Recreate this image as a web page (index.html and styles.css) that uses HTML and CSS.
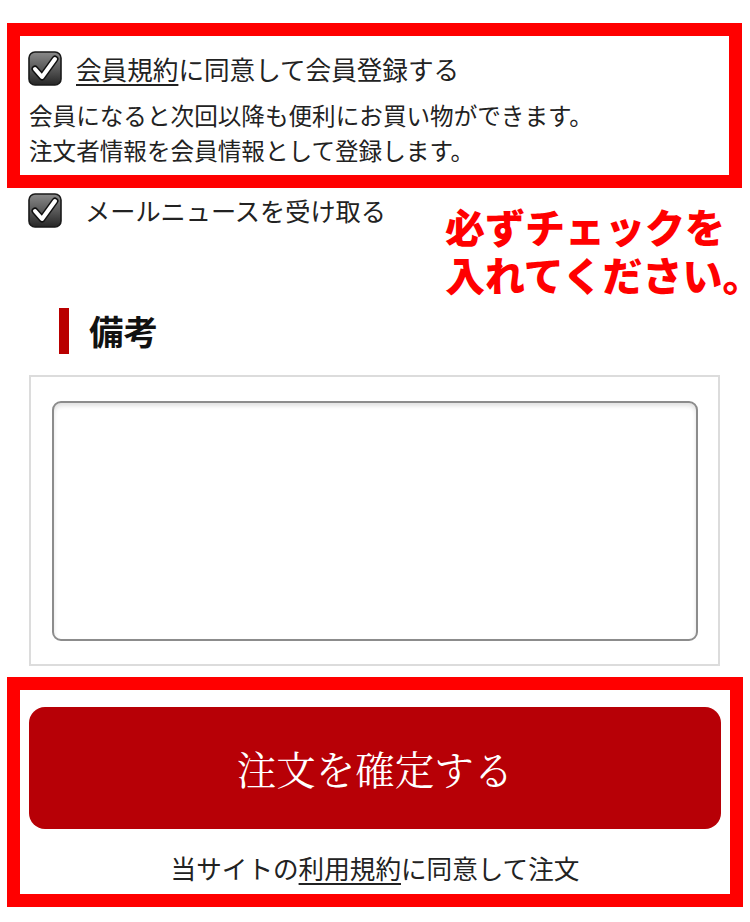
FILE: index.html
```html
<!DOCTYPE html>
<html lang="ja">
<head>
<meta charset="utf-8">
<title>注文確認</title>
<link rel="stylesheet" href="styles.css">
</head>
<body>
<div class="page">
  <section class="member-box">
    <label class="check-row">
      <span class="checkbox">
        <svg viewBox="0 0 34 35" width="34" height="35">
          <defs>
            <linearGradient id="cbg" x1="0" y1="0" x2="0" y2="1">
              <stop offset="0" stop-color="#8a8a8a"/>
              <stop offset="0.5" stop-color="#5a5a5a"/>
              <stop offset="1" stop-color="#262626"/>
            </linearGradient>
          </defs>
          <rect x="1" y="1" width="32" height="33" rx="6" ry="6" fill="url(#cbg)" stroke="#1a1a1a" stroke-width="1.6"/>
          <path d="M7 18 L14 26 L27 8" fill="none" stroke="#111" stroke-width="7" stroke-linecap="round" stroke-linejoin="round"/>
          <path d="M7 18 L14 26 L27 8" fill="none" stroke="#fff" stroke-width="4" stroke-linecap="round" stroke-linejoin="round"/>
        </svg>
      </span>
      <span class="check-label"><u>会員規約</u>に同意して会員登録する</span>
    </label>
    <p class="desc">会員になると次回以降も便利にお買い物ができます。<br>注文者情報を会員情報として登録します。</p>
  </section>

  <div class="news-area">
    <label class="check-row news-row">
      <span class="checkbox">
        <svg viewBox="0 0 34 35" width="34" height="35">
          <defs>
            <linearGradient id="cbg2" x1="0" y1="0" x2="0" y2="1">
              <stop offset="0" stop-color="#8a8a8a"/>
              <stop offset="0.5" stop-color="#5a5a5a"/>
              <stop offset="1" stop-color="#262626"/>
            </linearGradient>
          </defs>
          <rect x="1" y="1" width="32" height="33" rx="6" ry="6" fill="url(#cbg2)" stroke="#1a1a1a" stroke-width="1.6"/>
          <path d="M7 18 L14 26 L27 8" fill="none" stroke="#111" stroke-width="7" stroke-linecap="round" stroke-linejoin="round"/>
          <path d="M7 18 L14 26 L27 8" fill="none" stroke="#fff" stroke-width="4" stroke-linecap="round" stroke-linejoin="round"/>
        </svg>
      </span>
      <span class="check-label news-label">メールニュースを受け取る</span>
    </label>
    <p class="notice"><span class="notice-line">必ずチェックを</span><span class="notice-line">入れてください。</span></p>
  </div>

  <h2 class="section-title">備考</h2>

  <div class="remarks">
    <textarea class="remarks-input"></textarea>
  </div>

  <section class="order-box">
    <button class="order-btn" type="button">注文を確定する</button>
    <p class="terms">当サイトの<u>利用規約</u>に同意して注文</p>
  </section>
</div>
</body>
</html>
```

FILE: styles.css
```css
* { box-sizing: border-box; }

html, body {
  margin: 0;
  padding: 0;
  background: #fff;
}

body {
  font-family: "Noto Sans CJK JP", "Noto Sans", sans-serif;
  color: #222;
}

.page {
  width: 750px;
  padding-top: 23px;
}

.member-box {
  margin: 0 8px 0 7px;
  border: 13px solid #ff0000;
  padding: 15px 0 7px 8px;
}

.check-row {
  display: flex;
  align-items: center;
  height: 35px;
}

.checkbox {
  display: block;
  width: 34px;
  height: 35px;
  flex: none;
}

.checkbox svg { display: block; }

.check-label {
  margin-left: 14px;
  font-size: 25.6px;
  line-height: 35px;
  white-space: nowrap;
}

.check-label u {
  text-decoration-thickness: 1.5px;
  text-underline-offset: 4px;
}

.desc {
  margin: 12px 0 0 1px;
  font-size: 23.6px;
  line-height: 35px;
}

.news-area {
  position: relative;
  height: 120px;
  padding: 5px 0 0 28px;
}

.news-label {
  margin-left: 23px;
  font-size: 25.2px;
}

.notice {
  position: absolute;
  left: 445px;
  top: 14px;
  margin: 0;
  color: #ff0000;
  font-size: 40px;
  font-weight: 900;
  line-height: 48px;
  white-space: nowrap;
}

.notice-line {
  display: block;
  height: 48px;
}

.section-title {
  margin: 0 0 21px 59px;
  height: 46px;
  border-left: 10px solid #b90000;
  padding-left: 20px;
  font-size: 34.5px;
  font-weight: 700;
  line-height: 44px;
  color: #111;
}

.remarks {
  margin: 0 30px 0 29px;
  border: 2px solid #dcdcdc;
  padding: 24px 20px 23px 21px;
}

.remarks-input {
  display: block;
  width: 100%;
  height: 240px;
  border: 2px solid #8c8c8c;
  border-radius: 9px;
  box-shadow: inset 0 3px 4px rgba(0,0,0,0.12);
  background: #fff;
  resize: none;
  outline: none;
  font: inherit;
}

.order-box {
  margin: 11px 7px 0 7px;
  border: 13px solid #ff0000;
  padding: 17px 9px 0 9px;
  height: 230px;
}

.order-btn {
  display: block;
  width: 100%;
  height: 122px;
  border: none;
  border-radius: 16px;
  background: #b70006;
  color: #fff;
  font-family: "Noto Serif CJK JP", "Noto Sans CJK JP", serif;
  font-size: 39.5px;
  font-weight: 400;
  letter-spacing: 0;
  cursor: pointer;
}

.terms {
  margin: 18px 0 0 0;
  text-align: center;
  font-size: 25.6px;
  line-height: 42px;
}

.terms u {
  text-decoration-thickness: 1.5px;
  text-underline-offset: 4px;
}
```
